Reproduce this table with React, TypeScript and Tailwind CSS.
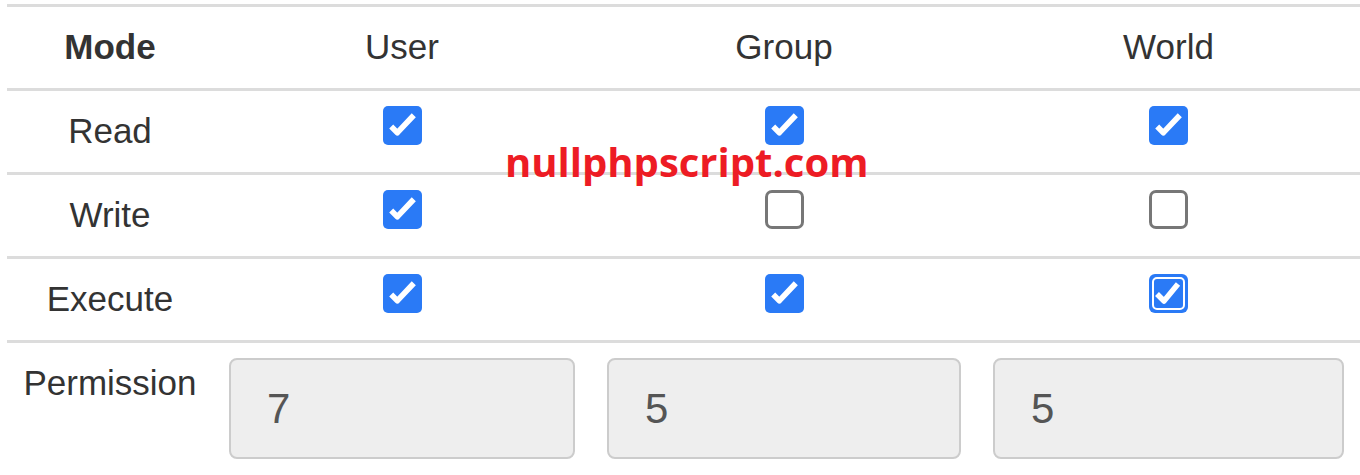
import React from 'react';

type Perm = { label: string; user: boolean; group: boolean; world: boolean; focusWorld?: boolean };

const ROWS: Perm[] = [
  { label: 'Read', user: true, group: true, world: true },
  { label: 'Write', user: true, group: false, world: false },
  { label: 'Execute', user: true, group: true, world: true, focusWorld: true },
];

const Check = ({ checked, focused }: { checked: boolean; focused?: boolean }) => {
  if (!checked) {
    return <div className="w-[39px] h-[39px] mb-3 rounded-[7px] border-[3px] border-[#777] bg-white" />;
  }
  if (focused) {
    return (
      <div className="w-[39px] h-[39px] mb-3 rounded-[6px] bg-[#2a7af6] p-[3px]">
        <div className="w-full h-full rounded-[5px] border-2 border-white">
          <svg viewBox="0 0 29 29" className="w-full h-full">
            <path d="M3 15 L10 22 L24 5" fill="none" stroke="white" strokeWidth="5.5" strokeLinejoin="round" />
          </svg>
        </div>
      </div>
    );
  }
  return (
    <div className="w-[39px] h-[39px] mb-3 rounded-[5px] bg-[#2a7af6]">
      <svg viewBox="0 0 38 38" className="w-full h-full">
        <path d="M8 20 L14 26 L30 9" fill="none" stroke="white" strokeWidth="5.5" strokeLinejoin="round" />
      </svg>
    </div>
  );
};

const rowCls = 'grid grid-cols-[206px_378px_386px_383px] border-t-[3px] border-[#dcdcdc]';

export default function App() {
  return (
    <div className="relative bg-white w-[1360px] h-[475px] overflow-hidden text-[#333] text-[35px] font-['Liberation_Sans',Arial,sans-serif]">
      <div className="pl-[7px] pt-[4px]">
        <div className={`${rowCls} h-[84px] items-center text-center`}>
          <div className="font-bold">Mode</div>
          <div>User</div>
          <div>Group</div>
          <div>World</div>
        </div>

        {ROWS.map(r => (
          <div key={r.label} className={`${rowCls} h-[84px] items-center text-center`}>
            <div>{r.label}</div>
            <div className="flex justify-center"><Check checked={r.user} /></div>
            <div className="flex justify-center"><Check checked={r.group} /></div>
            <div className="flex justify-center"><Check checked={r.world} focused={r.focusWorld} /></div>
          </div>
        ))}

        <div className={`${rowCls} items-start pb-4`}>
          <div className="text-center pt-[19px] leading-[1.2]">Permission</div>
          {['7', '5', '5'].map((v, i) => (
            <div key={i} className="px-4 pt-[15px]">
              <input
                readOnly
                value={v}
                className="w-full h-[101px] rounded-[8px] border-2 border-[#cccccc] bg-[#eeeeee] pl-[36px] text-[42px] text-[#555] outline-none"
              />
            </div>
          ))}
        </div>
      </div>

      {/* watermark */}
      <div className="absolute left-[505px] top-[142px] leading-none text-[40px] font-bold text-[#ed1c24] font-['Open_Sans',sans-serif]">
        nullphpscript.com
      </div>
    </div>
  );
}
